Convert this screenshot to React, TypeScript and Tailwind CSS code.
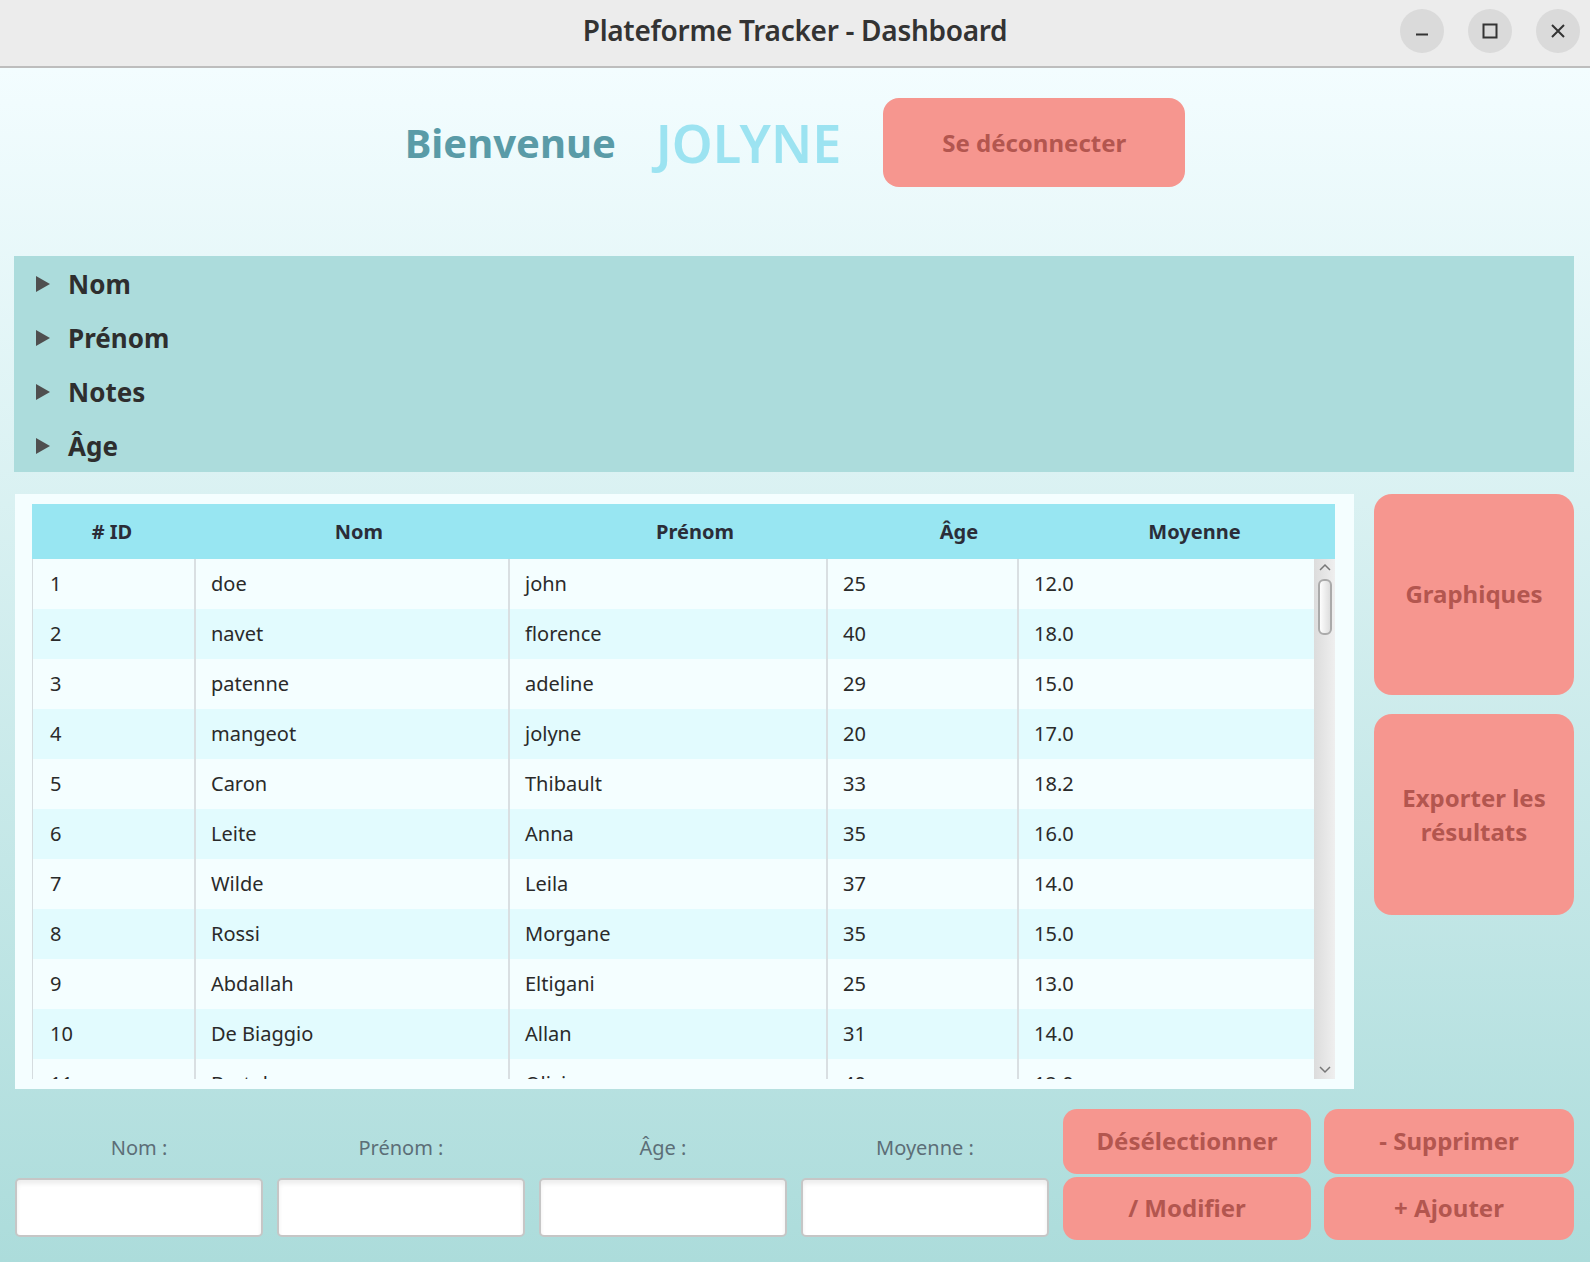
import React from 'react';

type Student = { id: number; nom: string; prenom: string; age: number; moyenne: string };

const students: Student[] = [
  { id: 1, nom: 'doe', prenom: 'john', age: 25, moyenne: '12.0' },
  { id: 2, nom: 'navet', prenom: 'florence', age: 40, moyenne: '18.0' },
  { id: 3, nom: 'patenne', prenom: 'adeline', age: 29, moyenne: '15.0' },
  { id: 4, nom: 'mangeot', prenom: 'jolyne', age: 20, moyenne: '17.0' },
  { id: 5, nom: 'Caron', prenom: 'Thibault', age: 33, moyenne: '18.2' },
  { id: 6, nom: 'Leite', prenom: 'Anna', age: 35, moyenne: '16.0' },
  { id: 7, nom: 'Wilde', prenom: 'Leila', age: 37, moyenne: '14.0' },
  { id: 8, nom: 'Rossi', prenom: 'Morgane', age: 35, moyenne: '15.0' },
  { id: 9, nom: 'Abdallah', prenom: 'Eltigani', age: 25, moyenne: '13.0' },
  { id: 10, nom: 'De Biaggio', prenom: 'Allan', age: 31, moyenne: '14.0' },
  { id: 11, nom: 'Bertola', prenom: 'Olivier', age: 40, moyenne: '12.0' },
];

const filters = ['Nom', 'Prénom', 'Notes', 'Âge'];
const fields = ['Nom :', 'Prénom :', 'Âge :', 'Moyenne :'];

// pink action button, same look everywhere in the app
const pinkBtn =
  'flex items-center justify-center bg-[#f6968f] text-[#b3564f] font-bold text-[24px] text-center';

function TitleBar() {
  return (
    <div className="relative flex h-[68px] shrink-0 items-center justify-center border-b-2 border-[#bdbdbd] bg-[#ececec] pb-[6px]">
      <span className="text-[28px] font-semibold tracking-[-0.3px] text-[#333]">Plateforme Tracker - Dashboard</span>
      <div className="absolute top-[9px] right-[10px] flex gap-[24px]">
        <div className="flex h-[44px] w-[44px] items-center justify-center rounded-full bg-[#dadada]">
          <svg width="16" height="16" viewBox="0 0 16 16">
            <path d="M2 11.5h12" stroke="#333" strokeWidth="2" />
          </svg>
        </div>
        <div className="flex h-[44px] w-[44px] items-center justify-center rounded-full bg-[#dadada]">
          <svg width="16" height="16" viewBox="0 0 16 16">
            <rect x="1.5" y="1.5" width="13" height="13" fill="none" stroke="#333" strokeWidth="2" />
          </svg>
        </div>
        <div className="flex h-[44px] w-[44px] items-center justify-center rounded-full bg-[#dadada]">
          <svg width="16" height="16" viewBox="0 0 16 16">
            <path d="M2 2l12 12M14 2L2 14" stroke="#333" strokeWidth="2" />
          </svg>
        </div>
      </div>
    </div>
  );
}

function Welcome() {
  return (
    <div className="flex h-[188px] shrink-0 items-start justify-center pt-[30px]">
      <div className="flex h-[89px] items-center">
        <span className="text-[40px] font-bold text-[#5a9ba7]">Bienvenue</span>
        <span className="ml-[40px] text-[52px] font-semibold text-[#9ce3f1]">JOLYNE</span>
        <button className={`${pinkBtn} ml-[42px] h-[89px] w-[302px] rounded-[16px]`}>Se déconnecter</button>
      </div>
    </div>
  );
}

function FilterPanel() {
  return (
    <div className="mr-[16px] ml-[14px] h-[216px] shrink-0 bg-[#acdcdc] pt-px">
      {filters.map((f) => (
        <div key={f} className="flex h-[54px] items-center pl-[22px]">
          <svg width="14" height="16" viewBox="0 0 14 16" className="shrink-0">
            <polygon points="0,0 14,8 0,16" fill="#4f4f4f" />
          </svg>
          <span className="ml-[18px] text-[26px] font-bold text-[#2e2e2e]">{f}</span>
        </div>
      ))}
    </div>
  );
}

function ScrollBar() {
  return (
    <div className="flex w-[21px] flex-col items-center bg-[linear-gradient(to_right,#dcdcdc,#efefef)]">
      <svg width="12" height="8" viewBox="0 0 12 8" className="mt-[4px]">
        <path d="M1 7l5-5 5 5" fill="none" stroke="#777" strokeWidth="1.5" />
      </svg>
      <div className="mt-[8px] h-[56px] w-[14px] rounded-[6px] border-2 border-[#aaa] bg-[linear-gradient(to_right,#fdfdfd,#dedede)]" />
      <div className="flex-1" />
      <svg width="12" height="8" viewBox="0 0 12 8" className="mb-[5px]">
        <path d="M1 1l5 5 5-5" fill="none" stroke="#777" strokeWidth="1.5" />
      </svg>
    </div>
  );
}

function StudentTable() {
  return (
    <div className="flex h-[595px] w-[1339px] flex-col bg-[#f4feff] pt-[10px] pr-[19px] pb-[10px] pl-[17px]">
      <div className="grid h-[55px] shrink-0 grid-cols-[160px_334px_338px_190px_281px] items-center bg-[#98e6f2] text-[20px] font-bold text-[#2b2d38]">
        <span className="text-center"># ID</span>
        <span className="text-center">Nom</span>
        <span className="text-center">Prénom</span>
        <span className="text-center">Âge</span>
        <span className="text-center">Moyenne</span>
      </div>
      <div className="flex h-[520px] overflow-hidden">
        <div className="flex-1 overflow-hidden border-l border-[#d5dcdf]">
          {students.map((s, i) => (
            <div
              key={s.id}
              className={`grid h-[50px] grid-cols-[161px_314px_318px_191px_1fr] text-[20px] text-[#2a2a2a] ${
                i % 2 === 0 ? 'bg-[#f4feff]' : 'bg-[#e2fbfe]'
              }`}
            >
              <span className="flex items-center pl-[17px]">{s.id}</span>
              <span className="flex items-center border-l-2 border-[#d9dfe2] pl-[15px]">{s.nom}</span>
              <span className="flex items-center border-l-2 border-[#d9dfe2] pl-[15px]">{s.prenom}</span>
              <span className="flex items-center border-l-2 border-[#d9dfe2] pl-[15px]">{s.age}</span>
              <span className="flex items-center border-l-2 border-[#d9dfe2] pl-[15px]">{s.moyenne}</span>
            </div>
          ))}
        </div>
        <ScrollBar />
      </div>
    </div>
  );
}

export default function App() {
  return (
    <div className="flex h-[1262px] w-[1590px] flex-col font-['Noto_Sans',sans-serif]">
      <TitleBar />
      <div className="flex flex-1 flex-col bg-[linear-gradient(to_bottom,#f3fdff,#acdcdb)]">
        <Welcome />
        <FilterPanel />

        <div className="mt-[22px] flex shrink-0 pl-[15px]">
          <StudentTable />
          <div className="ml-[20px] flex w-[200px] flex-col gap-[19px]">
            <button className={`${pinkBtn} h-[201px] rounded-[18px] pb-[2px]`}>Graphiques</button>
            <button className={`${pinkBtn} h-[201px] rounded-[18px] px-4 leading-[1.4]`}>Exporter les résultats</button>
          </div>
        </div>

        <div className="mt-[20px] flex gap-[14px] pl-[15px]">
          {fields.map((f) => (
            <div key={f} className="flex w-[248px] flex-col">
              <div className="flex h-[69px] items-center justify-center pt-[8px] text-[20px] text-[#5c6e77]">{f}</div>
              <div className="h-[59px] rounded-[5px] border-2 border-[#c6c6c6] bg-white shadow-[inset_0_4px_4px_rgba(0,0,0,0.07)]" />
            </div>
          ))}
          <div className="grid grid-cols-[248px_250px] grid-rows-[65px_63px] gap-x-[13px] gap-y-[3px]">
            <button className={`${pinkBtn} rounded-[14px] pb-[2px]`}>Désélectionner</button>
            <button className={`${pinkBtn} rounded-[14px] pb-[2px]`}>- Supprimer</button>
            <button className={`${pinkBtn} rounded-[14px] pb-[2px]`}>/ Modifier</button>
            <button className={`${pinkBtn} rounded-[14px] pb-[2px]`}>+ Ajouter</button>
          </div>
        </div>
      </div>
    </div>
  );
}
